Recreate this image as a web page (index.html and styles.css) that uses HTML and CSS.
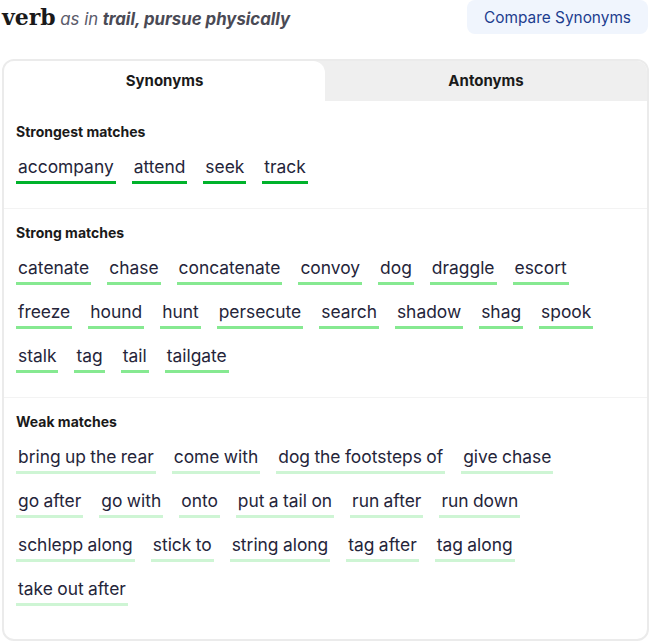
FILE: index.html
```html
<!DOCTYPE html>
<html lang="en">
<head>
<meta charset="utf-8">
<title>trail synonyms</title>
<link rel="stylesheet" href="styles.css">
</head>
<body>
<div class="page">
  <header class="head">
    <h2 class="pos"><span class="pos-word">verb</span> <span class="as">as in</span> <strong class="sense">trail, pursue physically</strong></h2>
    <button class="compare">Compare Synonyms</button>
  </header>
  <section class="card">
    <div class="tabs">
      <div class="tab tab-active">Synonyms</div>
      <div class="tab tab-off">Antonyms</div>
    </div>
    <div class="group group-first">
      <p class="group-title">Strongest matches</p>
      <ul class="words">
        <li class="w w1">accompany</li>
        <li class="w w1">attend</li>
        <li class="w w1">seek</li>
        <li class="w w1">track</li>
      </ul>
    </div>
    <div class="group">
      <p class="group-title">Strong matches</p>
      <ul class="words">
        <li class="w w2">catenate</li>
        <li class="w w2">chase</li>
        <li class="w w2">concatenate</li>
        <li class="w w2">convoy</li>
        <li class="w w2">dog</li>
        <li class="w w2">draggle</li>
        <li class="w w2">escort</li>
        <li class="w w2">freeze</li>
        <li class="w w2">hound</li>
        <li class="w w2">hunt</li>
        <li class="w w2">persecute</li>
        <li class="w w2">search</li>
        <li class="w w2">shadow</li>
        <li class="w w2">shag</li>
        <li class="w w2">spook</li>
        <li class="w w2">stalk</li>
        <li class="w w2">tag</li>
        <li class="w w2">tail</li>
        <li class="w w2">tailgate</li>
      </ul>
    </div>
    <div class="group group-last">
      <p class="group-title">Weak matches</p>
      <ul class="words">
        <li class="w w3">bring up the rear</li>
        <li class="w w3">come with</li>
        <li class="w w3">dog the footsteps of</li>
        <li class="w w3">give chase</li>
        <li class="w w3">go after</li>
        <li class="w w3">go with</li>
        <li class="w w3">onto</li>
        <li class="w w3">put a tail on</li>
        <li class="w w3">run after</li>
        <li class="w w3">run down</li>
        <li class="w w3">schlepp along</li>
        <li class="w w3">stick to</li>
        <li class="w w3">string along</li>
        <li class="w w3">tag after</li>
        <li class="w w3">tag along</li>
        <li class="w w3">take out after</li>
      </ul>
    </div>
  </section>
</div>
</body>
</html>
```
FILE: styles.css
```css
* { box-sizing: border-box; }
html, body { margin: 0; padding: 0; background: #fff; }
body { font-family: Inter, "Noto Sans", sans-serif; color: #1f1f2e; }
.page { padding: 0 8px 0 2px; }
.head {
  display: flex;
  justify-content: space-between;
  align-items: flex-start;
  height: 59px;
}
.pos {
  margin: 0;
  font-weight: normal;
  line-height: 34px;
  white-space: nowrap;
  font-size: 16px;
}
.pos-word {
  font-family: "DejaVu Serif", serif;
  font-weight: bold;
  font-size: 22px;
  color: #1a1a1a;
}
.as {
  font-style: italic;
  font-size: 16.8px;
  color: #5b5b6b;
}
.sense {
  font-style: italic;
  font-weight: 700;
  font-size: 16.8px;
  color: #4a4a55;
}
.compare {
  height: 34px;
  padding: 0 17px;
  border: none;
  border-radius: 8px;
  background: #f0f5fd;
  color: #1d3d8f;
  font-family: Inter, "Noto Sans", sans-serif;
  font-size: 15.4px;
  margin-right: 1px;
}
.card {
  border: 2px solid #ebebeb;
  border-radius: 12px;
  overflow: hidden;
  height: 582px;
}
.tabs {
  display: grid;
  grid-template-columns: 321px 1fr;
  background: #efefef;
  height: 40px;
}
.tab {
  display: flex;
  align-items: center;
  justify-content: center;
  padding-bottom: 2px;
  font-weight: 700;
  font-size: 15px;
  color: #1a1a1a;
}
.tab-active {
  background: #fff;
  border-top-right-radius: 12px;
}
.group {
  padding: 16px 12px 24px 12px;
  border-bottom: 1px solid #f3f3f3;
}
.group-first { padding-top: 23px; }
.group-last { border-bottom: none; padding-top: 16px; }
.group-title {
  margin: 0 0 15px;
  font-size: 14px;
  line-height: 16px;
  font-weight: 700;
  color: #1a1a1a;
}
.words {
  list-style: none;
  margin: 0;
  padding: 0;
  display: flex;
  flex-wrap: wrap;
  column-gap: 16px;
  row-gap: 15px;
}
.w {
  font-size: 17.4px;
  line-height: 24px;
  padding: 0 2px 2px;
  border-bottom: 3px solid;
  color: #25253a;
  word-spacing: -0.5px;
}
.w1 { border-bottom-color: #00b22b; }
.w2 { border-bottom-color: #86e991; }
.w3 { border-bottom-color: #cef5d4; }
```
